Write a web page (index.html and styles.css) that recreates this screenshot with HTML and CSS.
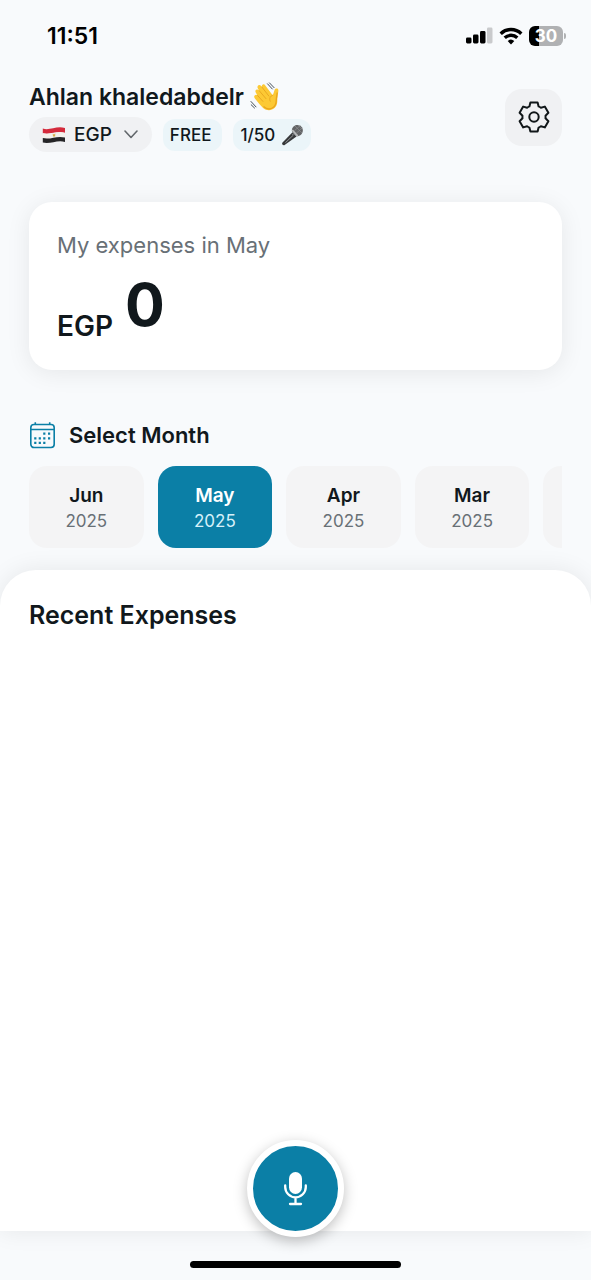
FILE: index.html
```html
<!DOCTYPE html>
<html lang="en">
<head>
<meta charset="utf-8">
<meta name="viewport" content="width=device-width, initial-scale=1">
<title>Expenses</title>
<link rel="stylesheet" href="styles.css">
</head>
<body>
<div class="app">
  <div class="status-bar">
    <time class="clock">11:51</time>
    <div class="status-icons">
      <svg width="27" height="17" viewBox="0 0 27 17" aria-hidden="true">
        <rect x="0" y="10.5" width="5.500" height="6" rx="1.4"/>
        <rect x="7" y="7.5" width="5.500" height="9" rx="1.4"/>
        <rect x="14" y="4" width="5.500" height="12.5" rx="1.4"/>
        <rect x="21" y="0.5" width="5.500" height="16" rx="1.4" fill="#c9cacc"/>
      </svg>
      <svg width="24" height="18" viewBox="0 0 24 18" fill="none" stroke="#000" stroke-width="3.4" aria-hidden="true">
        <path d="M1.7 6.7a14.8 14.8 0 0 1 20.6 0"/>
        <path d="M5.7 10.8a9.2 9.2 0 0 1 12.6 0"/>
        <path d="M12 17.4 8.7 14.1a4.8 4.8 0 0 1 6.6 0z" fill="#000" stroke="none"/>
      </svg>
      <div class="battery"><span class="battery-level">30</span><span class="battery-tip"></span></div>
    </div>
  </div>

  <header class="header">
    <div class="profile">
      <h1 class="greeting">Ahlan khaledabdelr
        <svg width="30" height="30" viewBox="0 0 30 30" role="img" aria-label="waving hand">
          <g fill="none" stroke="#46505a" stroke-width="1" stroke-linecap="round">
            <path d="m17.500 1.800 4.800 5.200M19.500.9l4.600 4.800M1 19.500l5 5.400M1.200 22.800l3.300 3.200"/>
          </g>
          <path d="M4.700 13.400c.8-1 2-.9 2.800 0L6 11c-1-1.600-.7-2.600.2-3.200 1-.6 2-.3 3 .9L7.900 6.400c-.9-1.500-.4-2.700.6-3.200 1-.5 2 0 2.800 1.100l.6.800c-.4-1.300 0-2.200.9-2.600 1-.4 1.900.1 2.700 1.200l7.200 9.500c.9-1.600 1.200-3.400 1.700-4.800.5-1.600 1.500-2.200 2.700-1.800 1.200.4 1.400 1.500 1.200 2.900l-.9 6.800c-.3 3.300.4 6.500-2.600 9.400-3.300 3.200-8.200 3.200-11.700.2-2.300-2-5.600-6.100-8.200-9.400-1-1.200-.9-2.400-.2-3.100z" fill="#fcc934"/>
          <path d="m7.500 13.400 5.400 6M9.200 8.700l6.800 8M11.900 5.100l7 9M22.700 13.200c-2.700.9-3.800 3.500-2.500 6" fill="none" stroke="#e3a01c" stroke-width=".8" stroke-linecap="round"/>
          <path d="M27.200 10.500 26.300 17c0 3.300.1 6-2.800 8.300-3 2.300-7 1.800-10-.7" fill="none" stroke="#eaa51d" stroke-width="1.300"/>
        </svg>
      </h1>
      <div class="badges">
        <button class="currency" type="button">
          <svg width="24" height="18" viewBox="0 0 24 18" aria-hidden="true">
            <path d="M.8 2.600C8 4.800 14.500-.6 23 2v4.900c-8-2.500-14.500 2.300-22.200.4z" fill="#d42b3c"/>
            <path d="M.8 7.200C8.500 9.100 15 4.300 23 6.800v4.800c-8-2.400-14.500 2.400-22.200.6z" fill="#f4f2ed"/>
            <path d="M.8 12.100c7.700 1.900 14.200-2.900 22.200-.5v4.300c-8-2.400-14.500 2.600-22.200.7z" fill="#252527"/>
            <path d="m10.700 7.800 1.300.7 1.300-1-.2 3.100H11z" fill="#d8ad4b"/>
          </svg>
          <span>EGP</span>
          <svg width="14" height="9" viewBox="0 0 14 9" fill="none" stroke="#62676b" stroke-width="1.600" stroke-linecap="round" stroke-linejoin="round" aria-hidden="true"><path d="m1 1 6 6.500L13 1"/></svg>
        </button>
        <span class="badge plan">FREE</span>
        <span class="badge">1/50
          <svg width="23" height="22" viewBox="0 0 23 22" role="img" aria-label="microphone">
            <path d="m11.500 8.300 4 4.100L3.600 21c-1.300.8-3.200-1-2.300-2.300z" fill="#36383a"/>
            <path d="m11.200 9.800 1.200 1.300-8 7.600" fill="none" stroke="#929597" stroke-width="1"/>
            <path d="M11 7.700c-.7-3.200 1.300-6 4.500-6.700 3.600-.6 6.700 2.500 6.300 5.900-.4 3.300-3.100 5.400-6.400 5.400z" fill="#626466"/>
            <path d="m11.200 6 5.500 6.200" stroke="#b9bbbc" stroke-width="1.800"/>
            <path d="m14 2 7 7M17 1.200l4.500 4.400M13.500 6.500l6-5M15 9.500l6.500-5.800" stroke="#929496" stroke-width=".6"/>
          </svg>
        </span>
      </div>
    </div>
    <button class="settings" type="button" aria-label="Settings">
      <svg width="32" height="32" viewBox="-16 -16 32 32" fill="none" stroke="#111719" stroke-width="2" stroke-linejoin="round" aria-hidden="true">
        <path d="M-3.600-14.600H3.600L4.600-10.600Q5.800-10.100 6.900-9.300L10.800-10.400 14.400-4.200 11.500-1.300Q11.700 0 11.500 1.300L14.400 4.200 10.800 10.400 6.900 9.300Q5.800 10.100 4.600 10.600L3.600 14.600H-3.600L-4.600 10.600Q-5.800 10.100-6.900 9.300L-10.800 10.400-14.400 4.200-11.500 1.300Q-11.700 0-11.500-1.300L-14.400-4.200-10.800-10.400-6.900-9.300Q-5.800-10.100-4.600-10.600Z"/>
        <circle r="4.700"/>
      </svg>
    </button>
  </header>

  <main class="content">
    <section class="summary">
      <h2 class="summary-title">My expenses in May</h2>
      <p class="total"><span class="total-currency">EGP</span><span class="total-amount">0</span></p>
    </section>

    <section class="months">
      <h2 class="months-title">
        <svg width="27" height="27" viewBox="0 0 27 27" fill="none" stroke="#0b7fa6" stroke-width="1.600" aria-hidden="true">
          <rect x="1.800" y="2.500" width="23.400" height="23" rx="3.200"/>
          <path d="M2 7.500h23M6.300.3v2.500M20.700.3v2.500"/>
          <g fill="#0b7fa6" stroke="none">
            <path d="M14.200 10.600h2.200v2.200h-2.200zM19 10.600h2.200v2.200H19zM5.200 15.200h2.200v2.200H5.200zM9.700 15.200h2.200v2.200H9.700zM14.200 15.200h2.200v2.200h-2.200zM19 15.200h2.200v2.200H19zM5.200 19.800h2.200V22H5.200zM9.700 19.800h2.200V22H9.700zM14.200 19.800h2.200V22h-2.200z"/>
          </g>
        </svg>
        Select Month
      </h2>
      <div class="month-list">
        <button class="month" type="button"><b>Jun</b><span>2025</span></button>
        <button class="month selected" type="button" aria-pressed="true"><b>May</b><span>2025</span></button>
        <button class="month" type="button"><b>Apr</b><span>2025</span></button>
        <button class="month" type="button"><b>Mar</b><span>2025</span></button>
        <button class="month" type="button" aria-label="Earlier month"></button>
      </div>
    </section>

    <section class="recent">
      <h2 class="recent-title">Recent Expenses</h2>
    </section>
  </main>

  <footer class="bottom-bar">
    <button class="record" type="button" aria-label="Record expense">
      <svg width="24" height="34" viewBox="0 0 24 34" fill="none" stroke="#fff" stroke-width="2.300" stroke-linecap="round" aria-hidden="true">
        <rect x="5" y="0" width="13" height="22" rx="6.500" fill="#fff" stroke="none"/>
        <path d="M1.200 13.500v1.500a10.300 10.300 0 0 0 20.600 0v-1.500M11.500 25.500v5.800M6 32h11"/>
      </svg>
    </button>
    <div class="home-indicator"></div>
  </footer>
</div>
</body>
</html>
```
FILE: styles.css
```css
* { box-sizing: border-box; }

body {
  margin: 0;
  background: #f8fafc;
  color: #11181c;
  font-family: Inter, "Liberation Sans", sans-serif;
}

h1, h2, p { margin: 0; }
button { border: 0; padding: 0; font: inherit; color: inherit; cursor: pointer; }
svg { display: block; flex: none; }

.app {
  display: flex;
  flex-direction: column;
  min-height: 100vh;
  overflow: hidden;
}

.status-bar {
  display: flex;
  align-items: center;
  justify-content: space-between;
  height: 71px;
  padding: 0 28px 0 47px;
}
.clock { font-size: 23px; font-weight: 600; color: #000; }
.status-icons { display: flex; align-items: center; gap: 6px; }

.battery {
  position: relative;
  width: 34px;
  height: 20px;
  border-radius: 6px;
  background: linear-gradient(90deg, #000 30%, #b0b1b3 30%);
  color: #fff;
  font-size: 17px;
  font-weight: 700;
  line-height: 20px;
  text-align: center;
}
.battery-tip {
  position: absolute;
  top: 7px;
  right: -3px;
  width: 2px;
  height: 6px;
  border-radius: 0 2px 2px 0;
  background: #b0b1b3;
}

.header {
  display: flex;
  align-items: center;
  justify-content: space-between;
  padding: 11px 29px 0;
}
.greeting {
  display: flex;
  align-items: center;
  gap: 6px;
  font-size: 23px;
  font-weight: 600;
  line-height: 30px;
}
.badges { display: flex; align-items: center; gap: 11px; margin-top: 5px; }
.currency {
  display: flex;
  align-items: center;
  gap: 8px;
  height: 35px;
  padding: 0 14px 0 13px;
  border-radius: 18px;
  background: #f0f1f3;
  font-size: 19px;
  font-weight: 500;
}
.currency svg:last-child { margin-left: 4px; }
.badge {
  display: flex;
  align-items: center;
  gap: 6px;
  height: 32px;
  padding: 0 7px;
  border-radius: 12px;
  background: #ebf5f9;
  font-size: 17px;
  font-weight: 500;
}
.plan { padding-right: 11px; }
.settings {
  display: grid;
  place-items: center;
  width: 57px;
  height: 57px;
  border-radius: 17px;
  background: #f0f1f3;
}

.content { display: flex; flex: 1; flex-direction: column; }

.summary {
  margin: 50px 29px 0;
  padding: 28px 28px 27px;
  border-radius: 23px;
  background: #fff;
  box-shadow: 0 3px 24px rgb(0 0 0 / 8%);
}
.summary-title { color: #687076; font-size: 22px; font-weight: 400; line-height: 30px; }
.total { display: flex; align-items: flex-end; gap: 12px; margin-top: 12px; }
.total-currency { font-size: 28px; font-weight: 600; line-height: 34px; }
.total-amount { padding-bottom: 5px; font-size: 59px; font-weight: 700; line-height: 66px; }

.months { padding: 50px 29px 22px; }
.months-title {
  display: flex;
  align-items: center;
  gap: 13px;
  font-size: 22px;
  font-weight: 600;
  line-height: 30px;
}
.month-list { display: flex; gap: 14px; margin-top: 16px; overflow: hidden; }
.month {
  display: flex;
  flex: 0 0 21.5%;
  flex-direction: column;
  align-items: center;
  justify-content: center;
  height: 82px;
  padding-top: 2px;
  border-radius: 18px;
  background: #f4f4f5;
}
.month b { color: #11181c; font-size: 19px; font-weight: 600; line-height: 26px; }
.month span { color: #687076; font-size: 17px; line-height: 24px; }
.month.selected { background: #0b7fa6; }
.month.selected b { color: #fff; }
.month.selected span { color: #d6f1fa; }

.recent {
  flex: 1;
  padding: 28px 29px;
  border-radius: 36px 36px 0 0;
  background: #fff;
  box-shadow: 0 0 24px rgb(0 0 0 / 8%);
}
.recent-title { font-size: 25px; font-weight: 600; line-height: 34px; }

.bottom-bar {
  position: relative;
  display: flex;
  align-items: flex-end;
  justify-content: center;
  height: 49px;
  padding-bottom: 12px;
}
.record {
  position: absolute;
  bottom: 43px;
  display: grid;
  place-items: center;
  width: 97px;
  height: 97px;
  border: 6px solid #fff;
  border-radius: 50%;
  background: #0b7fa6;
  box-shadow: 0 4px 14px rgb(0 0 0 / 25%);
}
.home-indicator { width: 211px; height: 7px; border-radius: 4px; background: #000; }
```
